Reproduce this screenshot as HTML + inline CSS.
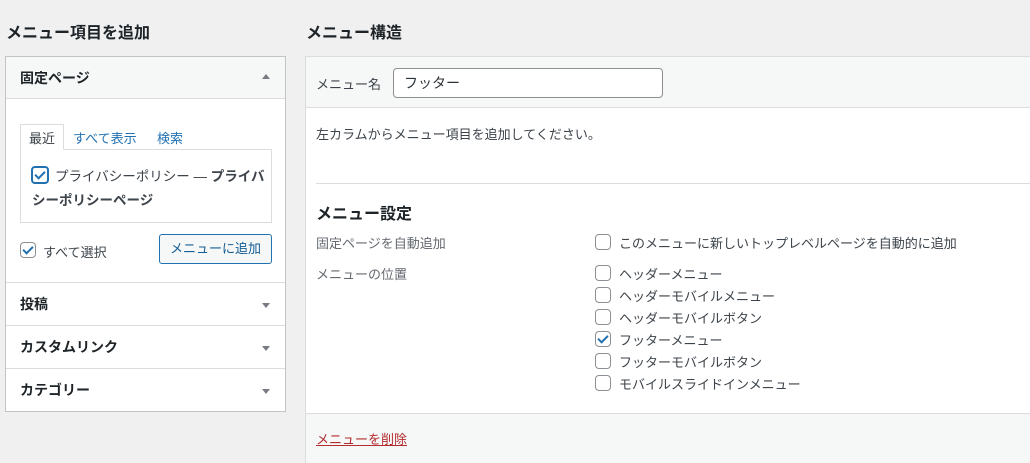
<!DOCTYPE html>
<html style="width:1030px;height:463px;overflow:hidden"><head><meta charset="utf-8"><style>
*{box-sizing:border-box;margin:0;padding:0}
body{width:1030px;height:463px;overflow:hidden;background:#f0f0f1;font-family:"Liberation Sans","Noto Sans CJK JP",sans-serif;color:#3c434a;font-size:13px;position:relative}
.a{position:absolute;white-space:nowrap}
h2{position:absolute;font-size:16px;font-weight:700;color:#1d2327}
.cb{position:absolute;width:16px;height:16px;border:1px solid #8c8f94;border-radius:4px;background:#fff}
.cb.on::after{content:"";position:absolute;left:4px;top:1px;width:4px;height:8px;border:solid #2271b1;border-width:0 2px 2px 0;transform:rotate(45deg)}
.tri{position:absolute;width:0;height:0;border-left:4px solid transparent;border-right:4px solid transparent}
</style></head><body>
<h2 style="left:6px;top:19px">メニュー項目を追加</h2>
<h2 style="left:306px;top:19px">メニュー構造</h2>

<div class="a" style="left:5px;top:56px;width:281px;height:356px;border:1px solid #c3c4c7;background:#fff"></div>
<div class="a" style="left:6px;top:57px;width:279px;height:42px;background:#f6f7f7;border-bottom:1px solid #dcdcde"></div>
<div class="a" style="left:20px;top:68px;font-weight:700;color:#1d2327;font-size:14px">固定ページ</div>
<div class="tri" style="left:262px;top:74px;border-bottom:5px solid #787c82"></div>

<div class="a" style="left:20px;top:149px;width:252px;height:74px;border:1px solid #dcdcde"></div>
<div class="a" style="left:20px;top:124px;width:44px;height:26px;border:1px solid #dcdcde;border-bottom:1px solid #fff;background:#fff"></div>
<div class="a" style="left:29px;top:128px">最近</div>
<div class="a" style="left:73px;top:128px;color:#2271b1">すべて表示</div>
<div class="a" style="left:157px;top:128px;color:#2271b1">検索</div>
<div class="cb on" style="left:31px;top:166px;width:18px;height:18px;border:2px solid #2271b1"></div>
<div class="a" style="left:55px;top:165px;font-size:13.5px">プライバシーポリシー — <b>プライバ</b></div>
<div class="a" style="left:32px;top:189px;font-size:13.5px"><b>シーポリシーページ</b></div>
<div class="cb on" style="left:20px;top:242px"></div>
<div class="a" style="left:43px;top:242px">すべて選択</div>
<div class="a" style="left:159px;top:234px;width:113px;height:30px;border:1px solid #2271b1;border-radius:3px;background:#f6f7f7;text-align:center;line-height:28px;color:#135e96">メニューに追加</div>

<div class="a" style="left:6px;top:282px;width:279px;border-top:1px solid #dcdcde"></div>
<div class="a" style="left:20px;top:294px;font-weight:700;color:#1d2327;font-size:14px">投稿</div>
<div class="a" style="left:6px;top:325px;width:279px;border-top:1px solid #dcdcde"></div>
<div class="a" style="left:20px;top:337px;font-weight:700;color:#1d2327;font-size:14px">カスタムリンク</div>
<div class="a" style="left:6px;top:368px;width:279px;border-top:1px solid #dcdcde"></div>
<div class="a" style="left:20px;top:380px;font-weight:700;color:#1d2327;font-size:14px">カテゴリー</div>
<div class="tri" style="left:262px;top:303px;border-top:5px solid #787c82"></div>
<div class="tri" style="left:262px;top:346px;border-top:5px solid #787c82"></div>
<div class="tri" style="left:262px;top:389px;border-top:5px solid #787c82"></div>

<div class="a" style="left:305px;top:56px;width:730px;height:407px;border:1px solid #dcdcde;border-bottom:none;background:#fff"></div>
<div class="a" style="left:306px;top:57px;width:724px;height:51px;background:#f6f7f7;border-bottom:1px solid #dcdcde"></div>
<div class="a" style="left:316px;top:74px">メニュー名</div>
<div class="a" style="left:393px;top:68px;width:270px;height:30px;border:1px solid #8c8f94;border-radius:4px;background:#fff;padding-left:10px;line-height:28px;font-size:14px;color:#2c3338">フッター</div>
<div class="a" style="left:316px;top:124px">左カラムからメニュー項目を追加してください。</div>
<div class="a" style="left:316px;top:183px;width:714px;border-top:1px solid #dcdcde"></div>
<div class="a" style="left:316px;top:200px;font-size:16px;font-weight:700;color:#1d2327">メニュー設定</div>
<div class="a" style="left:316px;top:233px;color:#646970">固定ページを自動追加</div>
<div class="a" style="left:316px;top:264px;color:#646970">メニューの位置</div>
<div class="cb" style="left:595px;top:234px"></div><div class="a" style="left:619px;top:233px">このメニューに新しいトップレベルページを自動的に追加</div>
<div class="cb" style="left:595px;top:265px"></div><div class="a" style="left:619px;top:264px">ヘッダーメニュー</div>
<div class="cb" style="left:595px;top:287px"></div><div class="a" style="left:619px;top:286px">ヘッダーモバイルメニュー</div>
<div class="cb" style="left:595px;top:309px"></div><div class="a" style="left:619px;top:308px">ヘッダーモバイルボタン</div>
<div class="cb on" style="left:595px;top:331px"></div><div class="a" style="left:619px;top:330px">フッターメニュー</div>
<div class="cb" style="left:595px;top:353px"></div><div class="a" style="left:619px;top:352px">フッターモバイルボタン</div>
<div class="cb" style="left:595px;top:375px"></div><div class="a" style="left:619px;top:374px">モバイルスライドインメニュー</div>
<div class="a" style="left:306px;top:413px;width:724px;height:50px;background:#f6f7f7;border-top:1px solid #dcdcde"></div>
<div class="a" style="left:316px;top:429px;color:#b32d2e;text-decoration:underline">メニューを削除</div>
</body></html>
